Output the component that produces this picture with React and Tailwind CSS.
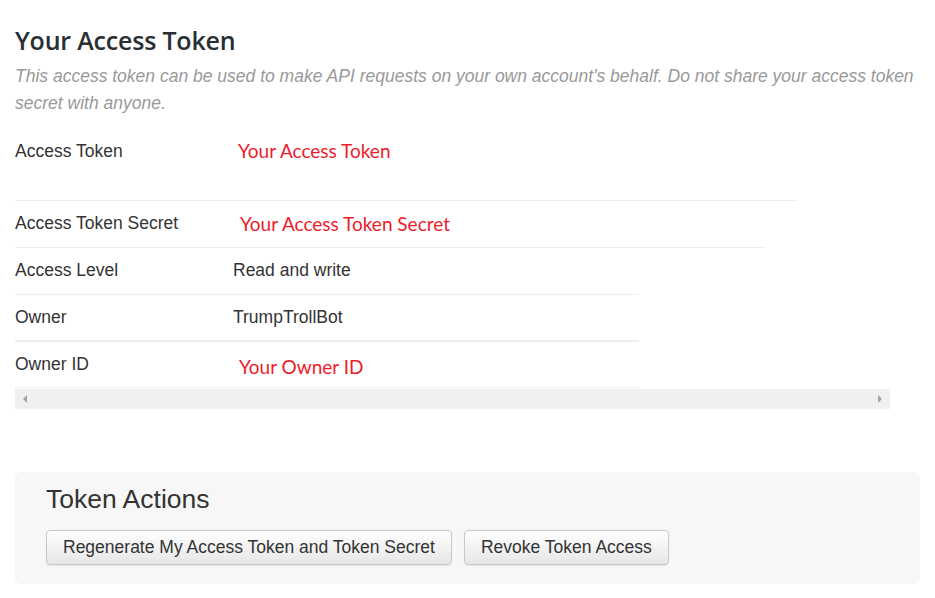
import React from "react";

const rows = [
  { label: "Access Token", value: "Your Access Token", red: true, width: "w-[782px]", height: "h-[72px]", valueClass: "pl-[5px] pt-[12px]" },
  { label: "Access Token Secret", value: "Your Access Token Secret", red: true, width: "w-[750px]", height: "h-[47px]", valueClass: "pl-[7px] pt-[13px]" },
  { label: "Access Level", value: "Read and write", width: "w-[624px]", height: "h-[47px]" },
  { label: "Owner", value: "TrumpTrollBot", width: "w-[624px]", height: "h-[47px]", thick: true },
  { label: "Owner ID", value: "Your Owner ID", red: true, width: "w-[624px]", height: "h-[46px]", valueClass: "pl-[6px] pt-[15px]" },
];

const App = () => {
  return (
    <div className="w-[935px] h-[598px] bg-white px-[15px] pt-[24px] font-['Liberation_Sans',Arial,sans-serif] text-[#333]">
      <h1 className="font-['Open_Sans',sans-serif] font-semibold text-[25px] leading-[32px] text-[#292f33] tracking-[-0.2px]">
        Your Access Token
      </h1>
      <p className="mt-[7px] text-[17.5px] leading-[27px] italic text-[#999] w-[910px]">
        This access token can be used to make API requests on your own account's behalf. Do not share your access token secret with anyone.
      </p>

      <div className="mt-[12px]">
        {rows.map((r) => (
          <div
            key={r.label}
            className={`flex ${r.height} ${r.width} border-b ${r.thick ? "border-b-2" : ""} border-[#eeeeee]`}
          >
            <div className="w-[218px] text-[17.5px] leading-[20px] pt-[12px] shrink-0">{r.label}</div>
            {r.red ? (
              <div className={`font-['Lato',sans-serif] text-[19px] leading-[20px] text-[#ec1c2a] ${r.valueClass}`}>
                {r.value}
              </div>
            ) : (
              <div className="text-[17.5px] leading-[20px] pt-[12px]">{r.value}</div>
            )}
          </div>
        ))}
        <div className="mt-[1px] flex items-center justify-between w-[875px] h-[20px] bg-[#f0f0f0] px-[7px]">
          <svg width="6" height="8" viewBox="0 0 6 8">
            <path d="M5 0 L1 4 L5 8 Z" fill="#a3a3a3" />
          </svg>
          <svg width="6" height="8" viewBox="0 0 6 8">
            <path d="M1 0 L5 4 L1 8 Z" fill="#a3a3a3" />
          </svg>
        </div>
      </div>

      <div className="mt-[63px] w-[905px] h-[112px] bg-[#f7f7f7] rounded-[6px] pl-[31px] pt-[12px]">
        <h2 className="text-[26.5px] leading-[30px] text-[#333]">Token Actions</h2>
        <div className="mt-[16px] flex gap-[12px]">
          <button className="h-[35px] px-[16px] text-[17.5px] text-[#333] rounded-[4px] border border-[#c8c8c8] bg-gradient-to-b from-white to-[#e6e6e6] shadow-[0_1px_1px_rgba(0,0,0,0.08)]">
            Regenerate My Access Token and Token Secret
          </button>
          <button className="h-[35px] px-[16px] text-[17.5px] text-[#333] rounded-[4px] border border-[#c8c8c8] bg-gradient-to-b from-white to-[#e6e6e6] shadow-[0_1px_1px_rgba(0,0,0,0.08)]">
            Revoke Token Access
          </button>
        </div>
      </div>
    </div>
  );
};

export default App;
